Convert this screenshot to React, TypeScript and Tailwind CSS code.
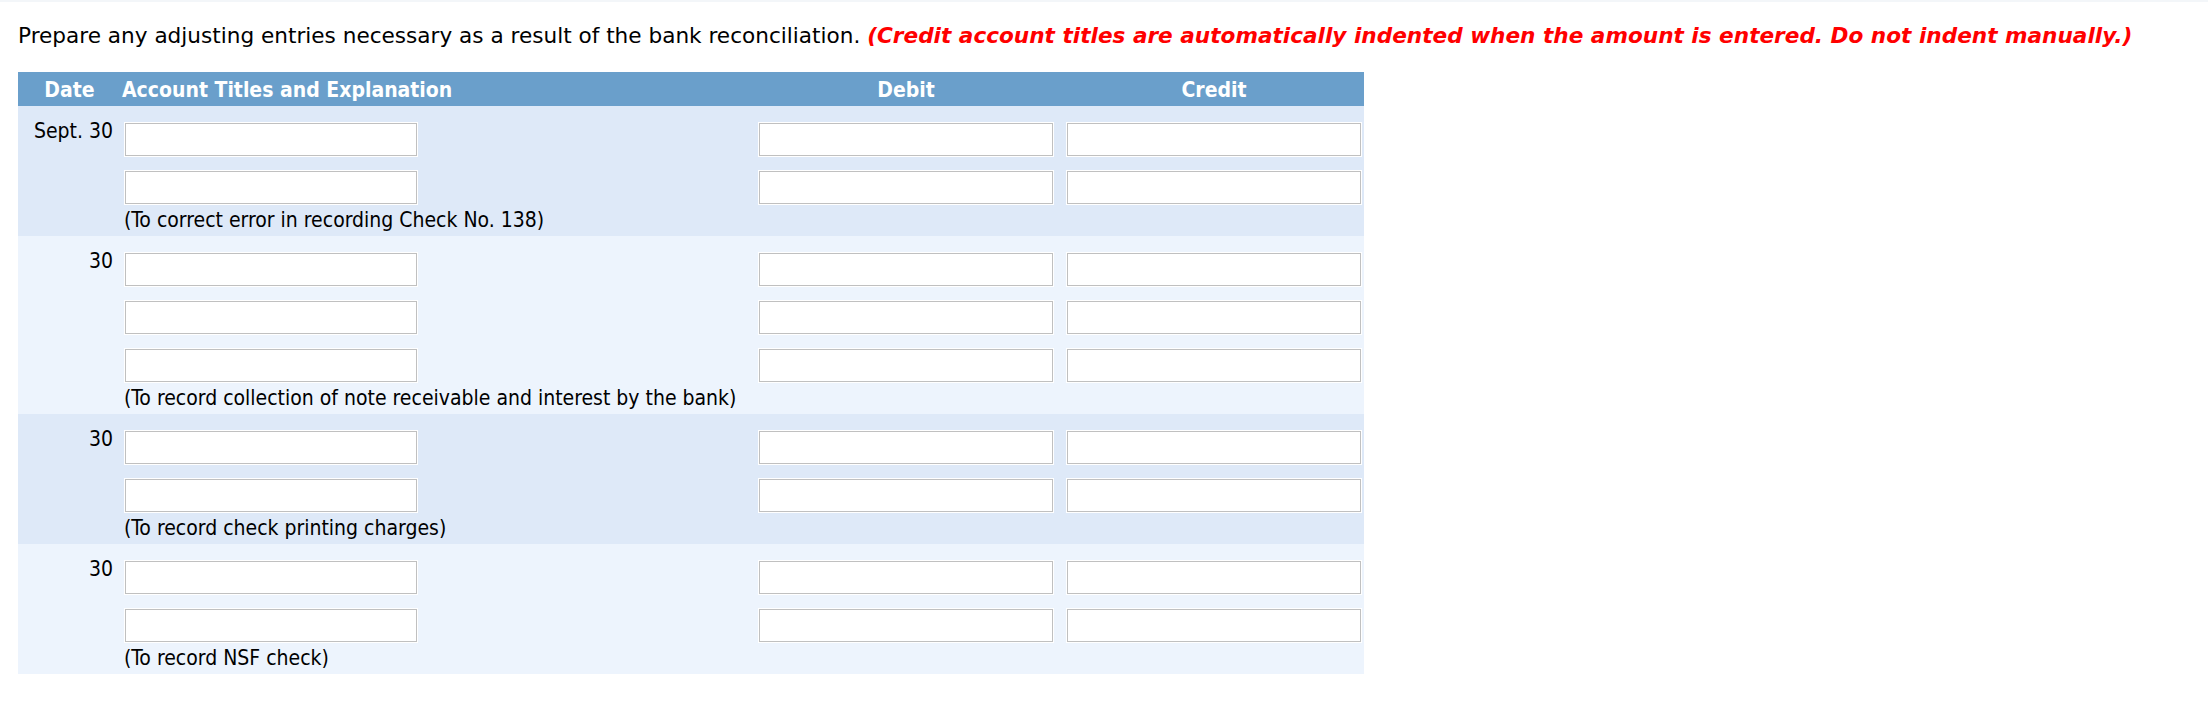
const groups = [
  {
    date: "Sept. 30",
    rows: 2,
    note: "(To correct error in recording Check No. 138)",
    dark: true,
  },
  {
    date: "30",
    rows: 3,
    note: "(To record collection of note receivable and interest by the bank)",
    dark: false,
  },
  {
    date: "30",
    rows: 2,
    note: "(To record check printing charges)",
    dark: true,
  },
  {
    date: "30",
    rows: 2,
    note: "(To record NSF check)",
    dark: false,
  },
];

const Box: React.FC<{ w: string }> = ({ w }) => (
  <input
    type="text"
    className={`${w} h-[33px] bg-white border border-[#c0c0c0] shadow-[0_0_0_1px_#ffffff] outline-none`}
  />
);

export default function App() {
  return (
    <div className="w-[2208px] min-h-[714px] bg-white text-black">
      <div className="h-[2px] bg-[#f3f6f9]"></div>
      <div className="px-[18px] pt-[22px]">
        <p className="font-['DejaVu_Sans','Verdana',sans-serif] text-[21.6px] leading-[24px] whitespace-nowrap">
          Prepare any adjusting entries necessary as a result of the bank
          reconciliation.{" "}
          <span className="text-[#ff0000] font-bold italic">
            (Credit account titles are automatically indented when the amount
            is entered. Do not indent manually.)
          </span>
        </p>

        <div className="mt-[24px] w-[1346px] font-['DejaVu_Sans_Condensed','Liberation_Sans',sans-serif] text-[21px]">
          {/* header */}
          <div className="flex h-[34px] bg-[#6a9fcb] text-white font-bold pt-[3px] leading-[31px]">
            <div className="w-[103px] text-center">Date</div>
            <div className="flex-1 pl-[1px]">Account Titles and Explanation</div>
            <div className="w-[308px] pl-[4px]">
              <div className="w-[294px] text-center">Debit</div>
            </div>
            <div className="w-[301px] pl-[4px]">
              <div className="w-[294px] text-center">Credit</div>
            </div>
          </div>

          {groups.map((g, gi) => (
            <div
              key={gi}
              className={`${g.dark ? "bg-[#dee9f8]" : "bg-[#edf4fd]"} pt-[17px]`}
            >
              <div className="flex flex-col gap-[15px]">
                {Array.from({ length: g.rows }).map((_, ri) => (
                  <div key={ri} className="flex h-[33px]">
                    <div className="w-[103px] pr-[8px] text-right leading-[16px] whitespace-nowrap">
                      {ri === 0 ? g.date : ""}
                    </div>
                    <div className="flex-1 pl-[4px]">
                      <Box w="w-[292px]" />
                    </div>
                    <div className="w-[308px] pl-[4px]">
                      <Box w="w-[294px]" />
                    </div>
                    <div className="w-[301px] pl-[4px]">
                      <Box w="w-[294px]" />
                    </div>
                  </div>
                ))}
              </div>
              <div className="flex h-[32px] leading-[32px]">
                <div className="w-[103px]"></div>
                <div className="flex-1 pl-[3px] whitespace-nowrap">{g.note}</div>
              </div>
            </div>
          ))}
        </div>
      </div>
    </div>
  );
}
